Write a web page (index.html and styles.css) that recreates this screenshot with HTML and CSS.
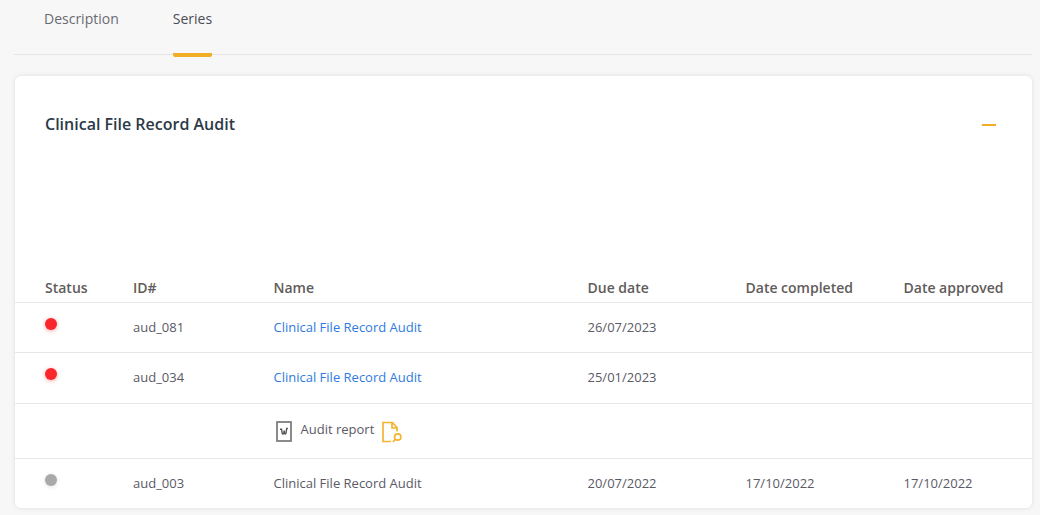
FILE: index.html
```html
<!DOCTYPE html>
<html lang="en">
<head>
<meta charset="utf-8">
<title>Series</title>
<link rel="stylesheet" href="styles.css">
</head>
<body>
<nav class="tabs">
  <a class="tab">Description</a>
  <a class="tab active">Series</a>
</nav>
<section class="card">
  <header class="card-head">
    <h2>Clinical File Record Audit</h2>
    <span class="collapse"></span>
  </header>
  <div class="table">
    <div class="row head">
      <div>Status</div><div>ID#</div><div>Name</div><div>Due date</div><div>Date completed</div><div>Date approved</div>
    </div>
    <div class="row">
      <div><span class="dot red"></span></div><div>aud_081</div><div><a class="link">Clinical File Record Audit</a></div><div>26/07/2023</div><div></div><div></div>
    </div>
    <div class="row r2">
      <div><span class="dot red"></span></div><div>aud_034</div><div><a class="link">Clinical File Record Audit</a></div><div>25/01/2023</div><div></div><div></div>
    </div>
    <div class="row report">
      <div></div><div></div>
      <div class="report-cell">
        <svg class="ico-w" width="16" height="21" viewBox="0 0 16 21"><rect x="1" y="1" width="14" height="19" fill="none" stroke="#777" stroke-width="1.7"/><path d="M4 8.2h1.5l.7 3.9c.2 1.3 1.3 1.2 1.6 0l.4-2.6.3 2.6c.2 1.2 1.3 1.2 1.5 0l.7-4.6h1.2" fill="none" stroke="#555" stroke-width="1.4"/></svg>
        <span class="report-label">Audit report</span>
        <svg class="ico-doc" width="22" height="24" viewBox="0 0 22 24"><path d="M10 20.5H2V1.5h9.5l4.5 5V10.5M11 2v5h5" fill="none" stroke="#f4b42e" stroke-width="1.7"/><circle cx="16.7" cy="16" r="3.2" fill="none" stroke="#f4b42e" stroke-width="1.7"/><path d="M14.4 18.4l-2.6 2.6" fill="none" stroke="#f4b42e" stroke-width="1.7"/></svg>
      </div>
      <div></div><div></div><div></div>
    </div>
    <div class="row last">
      <div><span class="dot grey"></span></div><div>aud_003</div><div>Clinical File Record Audit</div><div>20/07/2022</div><div>17/10/2022</div><div>17/10/2022</div>
    </div>
  </div>
</section>
</body>
</html>
```
FILE: styles.css
```css
* { box-sizing: border-box; }
html, body { margin: 0; height: 100%; overflow: hidden; }
body {
  background: #f7f7f7;
  font-family: "Open Sans", "Noto Sans", sans-serif;
  font-size: 13px;
  color: #5a5a66;
  padding: 0 8px 0 14px;
}
.tabs {
  display: flex;
  gap: 54px;
  height: 55px;
  padding-left: 30px;
  border-bottom: 1px solid #e4e4e4;
}
.tab {
  height: 57px;
  padding-top: 9px;
  font-size: 14px;
  line-height: 19px;
  color: #6b6b73;
}
.tab.active {
  color: #4c4c54;
  border-bottom: 4px solid #f2ae24;
  border-radius: 0 0 2px 2px;
  position: relative;
}
.card {
  margin-top: 21px;
  width: 1017px;
  height: 432px;
  margin-left: 1px;
  background: #fff;
  border-radius: 6px;
  box-shadow: 0 0 5px rgba(0,0,0,.1);
  overflow: hidden;
}
.card-head {
  display: flex;
  justify-content: space-between;
  align-items: center;
  height: 96px;
  padding: 0 36px 0 30px;
}
h2 {
  margin: 0;
  font-size: 16px;
  font-weight: 600;
  line-height: 22px;
  color: #2c3a47;
}
.collapse {
  width: 14px;
  height: 2px;
  margin-top: 2px;
  background: #f2ae24;
}
.table { margin-top: 104px; }
.row {
  display: grid;
  grid-template-columns: 88px 140.5px 314px 158px 158px 1fr;
  padding: 0 0 1px 30px;
  height: 50px;
  border-bottom: 1px solid #e6e6e6;
  align-items: center;
}
.row > div { line-height: 18px; white-space: nowrap; }
.row.head {
  height: 27px;
  font-weight: 600;
  font-size: 14px;
  color: #5f5c5a;
  padding: 3px 0 0 30px;
  align-items: start;
}
.row.r2 { height: 51px; padding-bottom: 2px; }
.row.report { height: 55px; padding-bottom: 3px; }
.row.last { height: 49px; border-bottom: 0; padding-bottom: 1px; }
.dot {
  display: block;
  width: 12px;
  height: 12px;
  border-radius: 50%;
  margin-top: -6px;
}
.dot.red { background: #f9262c; box-shadow: 0 1px 4px rgba(249,38,44,.4); }
.dot.grey { background: #a9a9a9; box-shadow: 0 1px 4px rgba(0,0,0,.12); }
.link { color: #2f7be0; }
.report-cell {
  display: flex;
  align-items: center;
  margin-left: 2px;
}
.report-label { margin-bottom: 2px; }
.ico-w { margin-right: 9px; margin-top: 3px; }
.ico-doc { margin-left: 7px; margin-top: 6px; }
```
